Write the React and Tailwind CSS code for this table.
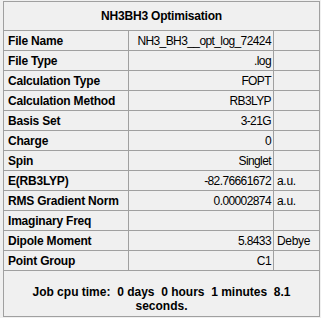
const rows = [
  ["File Name", "NH3_BH3__opt_log_72424", ""],
  ["File Type", ".log", ""],
  ["Calculation Type", "FOPT", ""],
  ["Calculation Method", "RB3LYP", ""],
  ["Basis Set", "3-21G", ""],
  ["Charge", "0", ""],
  ["Spin", "Singlet", ""],
  ["E(RB3LYP)", "-82.76661672", "a.u."],
  ["RMS Gradient Norm", "0.00002874", "a.u."],
  ["Imaginary Freq", "", ""],
  ["Dipole Moment", "5.8433", "Debye"],
  ["Point Group", "C1", ""],
];

export default function App() {
  return (
    <div
      className="w-[321px] h-[318px] bg-[#f0f0f0] pt-[1px] pl-[3px] text-[12px] text-black"
      style={{ fontFamily: '"Liberation Sans", Arial, sans-serif' }}
    >
      <div className="w-[317px] h-[316px] border border-[#a0a0a0] flex flex-col">
        <div className="h-[28px] flex items-center justify-center font-bold tracking-[-0.2px]">
          NH3BH3 Optimisation
        </div>
        {rows.map(([label, value, unit]) => (
          <div key={label} className="h-[20px] flex border-t border-[#a0a0a0]">
            <div className="w-[125px] border-r border-[#a0a0a0] pl-[4px] flex items-center font-bold whitespace-nowrap tracking-[-0.2px]">
              {label}
            </div>
            <div className="w-[145px] border-r border-[#a0a0a0] pr-[2px] flex items-center justify-end whitespace-nowrap tracking-[-0.6px]">
              {value}
            </div>
            <div className="flex-1 pl-[3px] flex items-center whitespace-nowrap tracking-[-0.3px]">{unit}</div>
          </div>
        ))}
        <div className="flex-1 border-t border-[#a0a0a0] pt-[14px] px-[20px] text-center font-bold leading-[14px] whitespace-pre-wrap">
          {"Job cpu time:  0 days  0 hours  1 minutes  8.1 seconds."}
        </div>
      </div>
    </div>
  );
}
